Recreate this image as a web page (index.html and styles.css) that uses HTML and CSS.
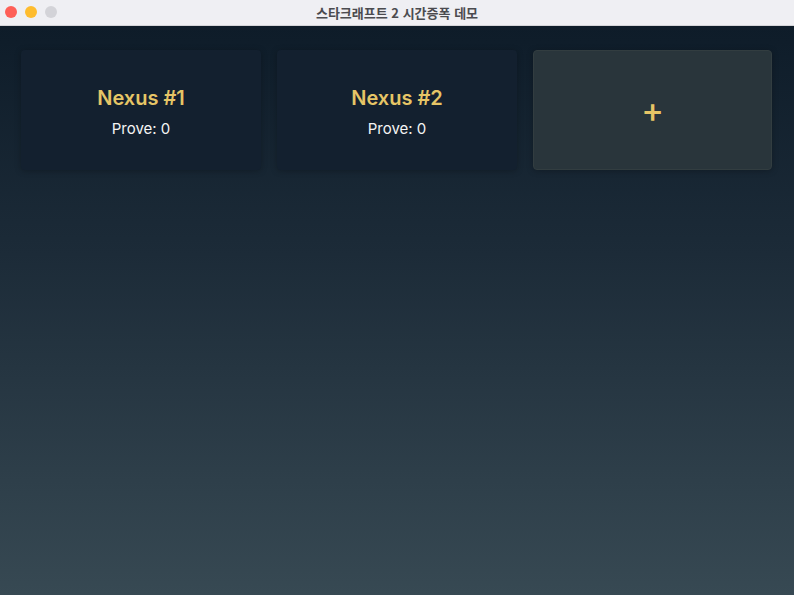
FILE: index.html
```html
<!DOCTYPE html>
<html lang="ko">
<head>
<meta charset="utf-8">
<title>스타크래프트 2 시간증폭 데모</title>
<link rel="stylesheet" href="styles.css">
</head>
<body>
<div class="window">
  <header class="titlebar">
    <div class="lights">
      <span class="light red"></span>
      <span class="light yellow"></span>
      <span class="light grey"></span>
    </div>
    <div class="title">스타크래프트 2 시간증폭 데모</div>
  </header>
  <main class="content">
    <div class="grid">
      <div class="card">
        <div class="name">Nexus #1</div>
        <div class="prove">Prove: 0</div>
      </div>
      <div class="card">
        <div class="name">Nexus #2</div>
        <div class="prove">Prove: 0</div>
      </div>
      <div class="card add">
        <span class="plus">+</span>
      </div>
    </div>
  </main>
</div>
</body>
</html>
```
FILE: styles.css
```css
html, body {
  margin: 0;
  padding: 0;
  width: 794px;
  height: 595px;
  overflow: hidden;
  font-family: Inter, "Noto Sans CJK KR", sans-serif;
}
.window {
  display: flex;
  flex-direction: column;
  height: 595px;
}
.titlebar {
  height: 26px;
  flex: 0 0 26px;
  background: #efeff3;
  border-bottom: 1px solid #d4d4d8;
  box-sizing: border-box;
  position: relative;
  display: flex;
  align-items: center;
  justify-content: center;
}
.lights {
  position: absolute;
  left: 5px;
  top: 6px;
  display: flex;
  gap: 8px;
}
.light {
  width: 12px;
  height: 12px;
  border-radius: 50%;
  display: block;
}
.red { background: #fe5f57; }
.yellow { background: #febc2e; }
.grey { background: #d3d3d8; }
.title {
  font-family: "Noto Sans CJK KR", sans-serif;
  font-size: 13px;
  font-weight: 700;
  color: #4b4b4f;
}
.content {
  flex: 1;
  background: linear-gradient(to bottom, #0e1c29 0%, #1c2b38 40%, #374953 100%);
  padding: 24px 21px 0 21px;
}
.grid {
  display: grid;
  grid-template-columns: 240px 240px 239px;
  gap: 16px;
}
.card {
  height: 120px;
  box-sizing: border-box;
  padding-top: 4px;
  background: #13202f;
  border-radius: 4px;
  box-shadow: 0 1px 6px rgba(0, 0, 0, 0.25);
  display: flex;
  flex-direction: column;
  align-items: center;
  justify-content: center;
}
.name {
  color: #e6c566;
  font-size: 20px;
  font-weight: 600;
  line-height: 24px;
}
.prove {
  color: #f4f4f4;
  font-size: 15px;
  line-height: 18px;
  margin-top: 10px;
}
.card.add {
  padding-top: 0;
  background: #29353b;
  border: 1px solid #323d40;
}
.plus {
  color: #e6c566;
  font-size: 34px;
  font-weight: 500;
  line-height: 34px;
}
```
